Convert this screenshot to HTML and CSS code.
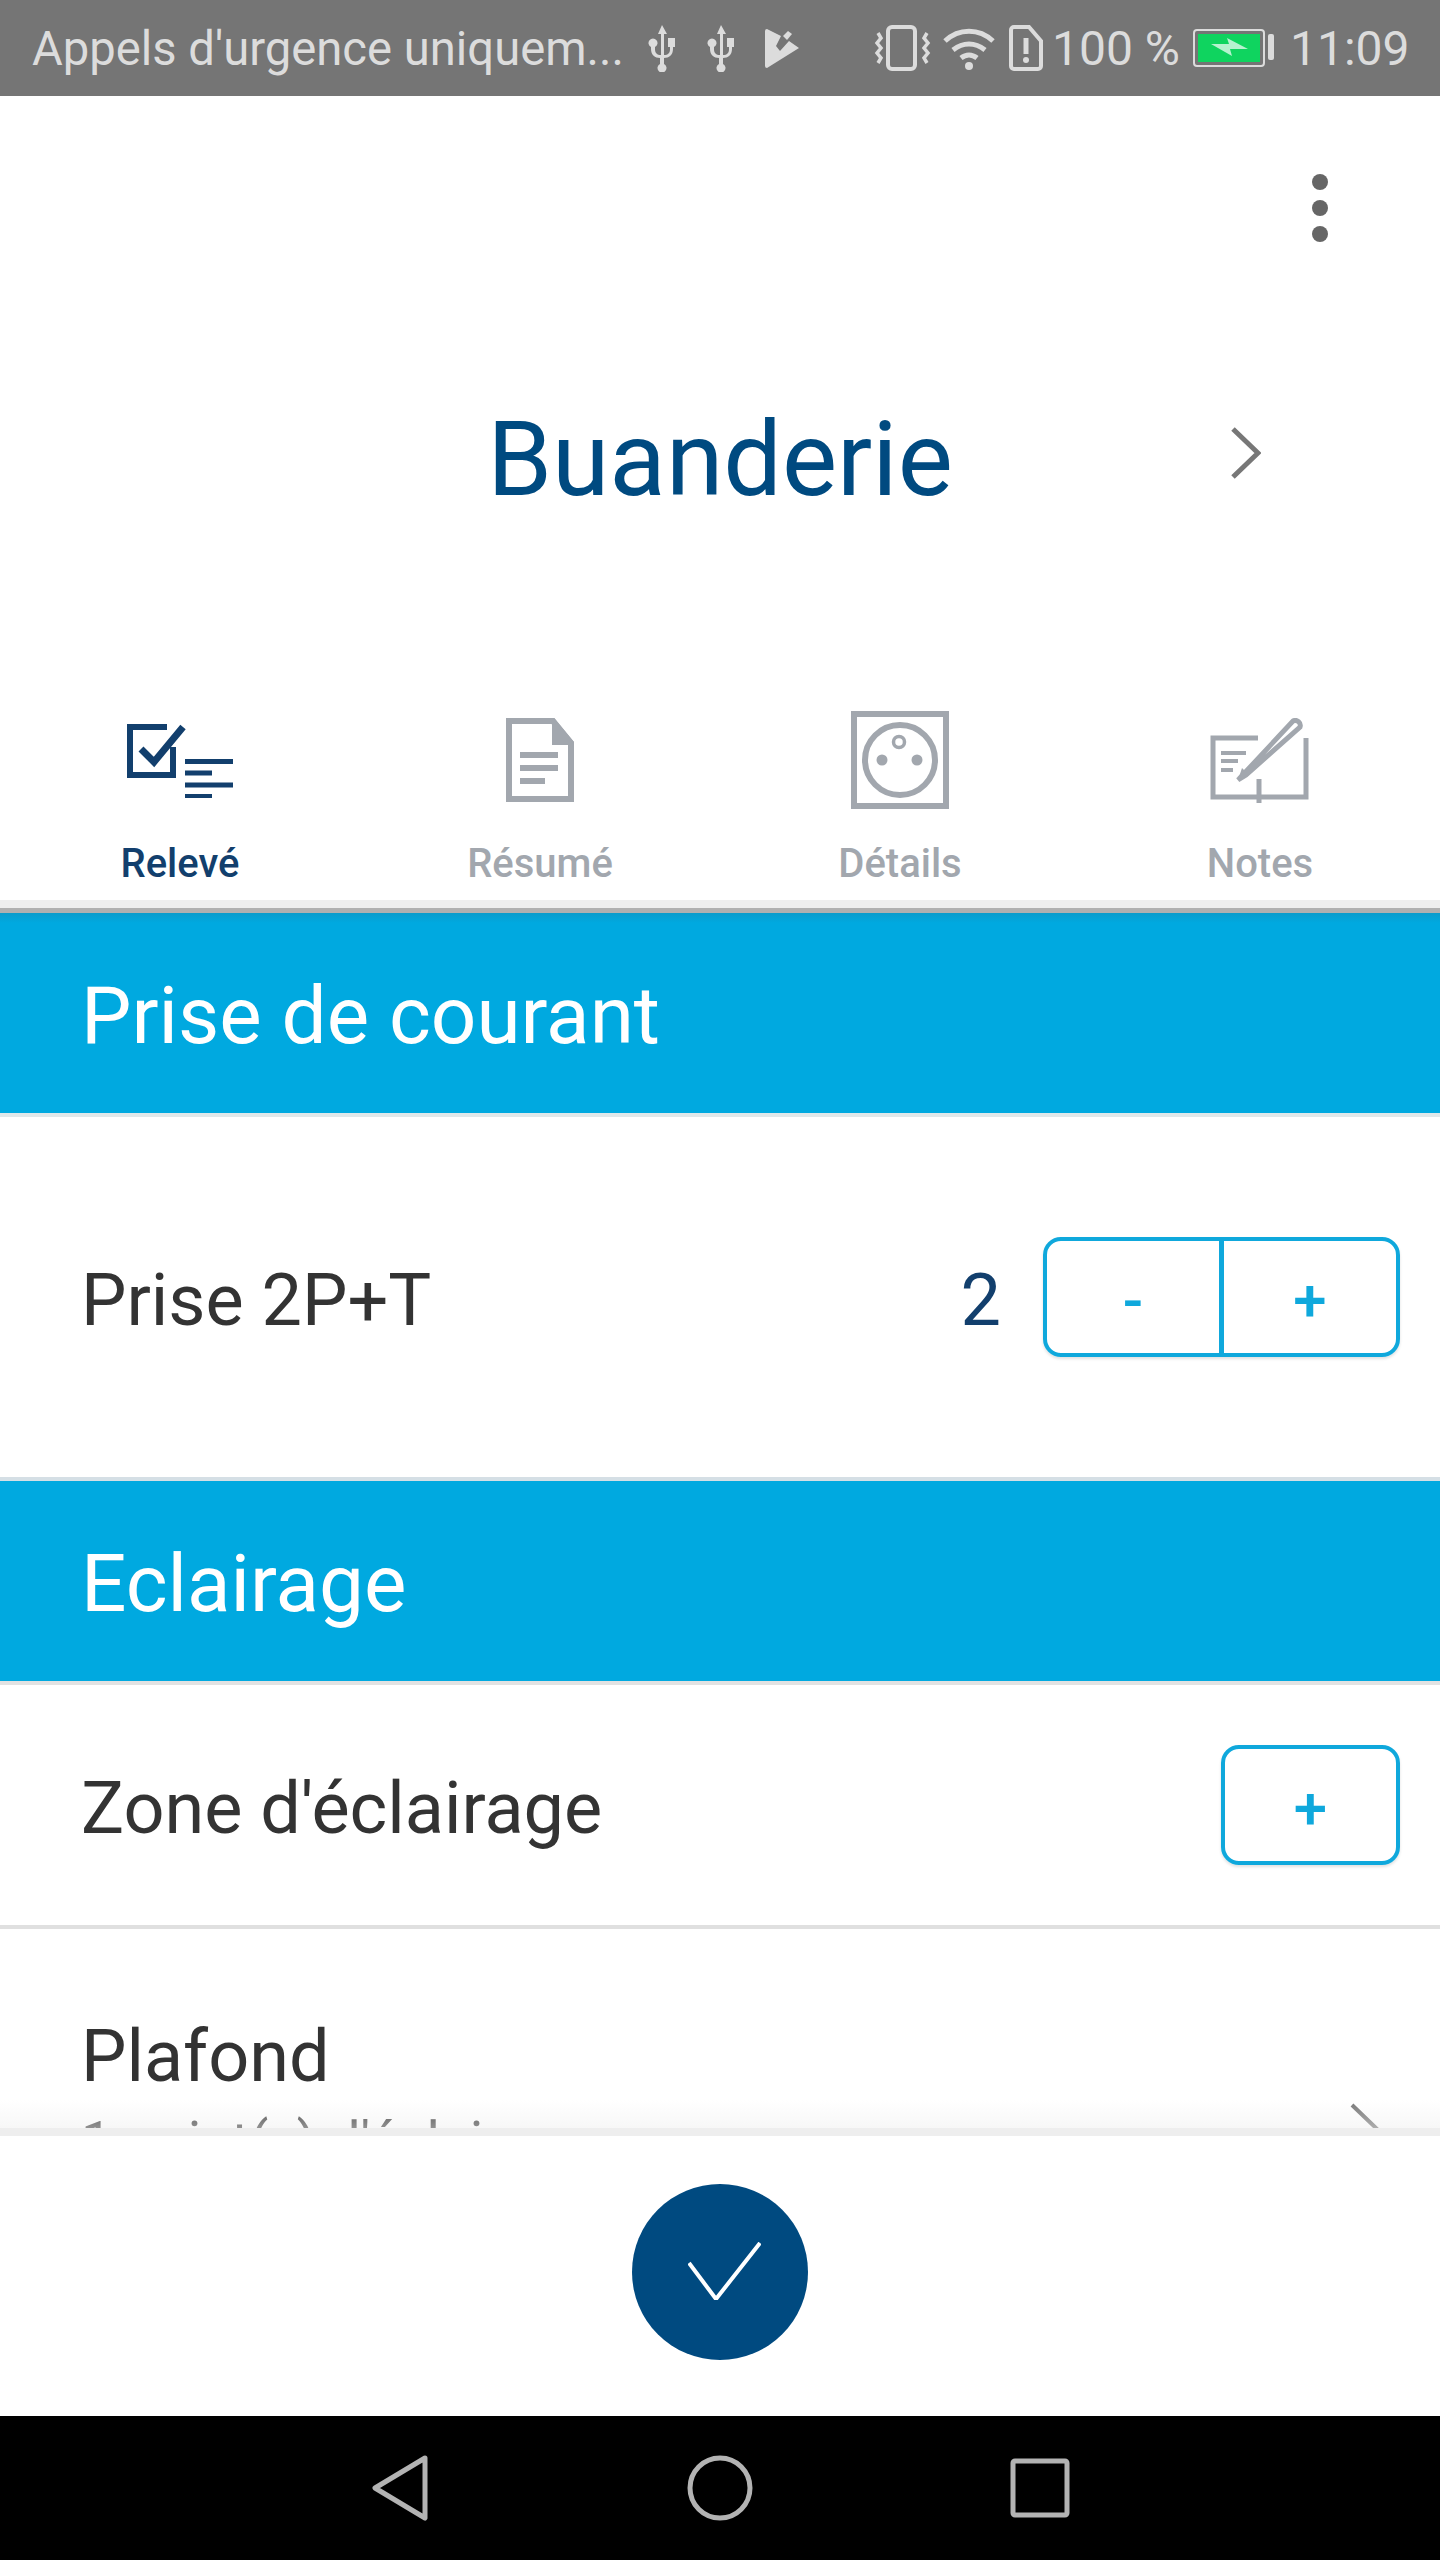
FILE: index.html
```html
<!DOCTYPE html>
<html lang="fr">
<head>
    <meta charset="UTF-8">
    <meta name="viewport" content="width=device-width, initial-scale=1.0">
    <title>Buanderie</title>
    <link rel="stylesheet" href="styles.css">
</head>
<body>
<div class="app">
    <div class="status-bar">
        <span class="status-text">Appels d'urgence uniquem...</span>
        <svg class="st-usb" width="30" height="47" viewBox="0 0 30 47" fill="#dcdcdc"><path d="M15 0l5 9h-3v21c4 0 6-2 6-6v-2h-2V13h7v9h-2v2c0 6-4 9-9 9v6a4.500 4.500 0 1 1-4 0v-6c-5 0-9-3-9-9v-2a4.500 4.500 0 1 1 4 0v2c0 4 2 6 6 6V9h-3z"/></svg>
        <svg class="st-usb2" width="30" height="47" viewBox="0 0 30 47" fill="#dcdcdc"><path d="M15 0l5 9h-3v21c4 0 6-2 6-6v-2h-2V13h7v9h-2v2c0 6-4 9-9 9v6a4.500 4.500 0 1 1-4 0v-6c-5 0-9-3-9-9v-2a4.500 4.500 0 1 1 4 0v2c0 4 2 6 6 6V9h-3z"/></svg>
        <svg class="st-play" width="34" height="39" viewBox="0 0 34 39"><path d="M2 0l14 7-5 10 4 5L24 12l10 7L2 39a2 2 0 0 1-2-2V2a2 2 0 0 1 2-2z" fill="#dcdcdc"/><path d="M18 7l5-5 4 3-5 6z" fill="#dcdcdc"/></svg>
        <svg class="st-vibrate" width="57" height="46" viewBox="0 0 57 46" fill="none" stroke="#dcdcdc"><rect x="14" y="2" width="27" height="42" rx="4" stroke-width="4"/><path d="M4 8l3 5-4 5 4 5-4 5 4 5-3 5M53 8l-3 5 4 5-4 5 4 5-4 5 3 5" stroke-width="3.500"/></svg>
        <svg class="st-wifi" width="52" height="43" viewBox="0 0 52 43" fill="none" stroke="#dcdcdc" stroke-width="5"><path d="M2 14c14-13 34-13 48 0M10 23c10-8 22-8 32 0M18 31c5-4 11-4 16 0"/><circle cx="26" cy="39" r="4" fill="#dcdcdc" stroke="none"/></svg>
        <svg class="st-sim" width="34" height="46" viewBox="0 0 34 46"><path d="M5 2h15l12 14v25a3 3 0 0 1-3 3H5a3 3 0 0 1-3-3V5a3 3 0 0 1 3-3z" fill="none" stroke="#dcdcdc" stroke-width="4"/><rect x="14.500" y="13" width="5" height="16" fill="#dcdcdc"/><circle cx="17" cy="35" r="3" fill="#dcdcdc"/></svg>
        <span class="status-pct">100 %</span>
        <svg class="st-battery" width="81" height="38" viewBox="0 0 81 38"><rect x="1" y="1" width="70" height="36" rx="3" fill="none" stroke="#dcdcdc" stroke-width="2"/><rect x="5" y="5" width="62" height="28" fill="#0fd45f"/><path d="M18 15h18l-2-6 21 11H37l2 7z" fill="#b6f2cf"/><rect x="75" y="5" width="6" height="26" rx="2" fill="#dcdcdc"/></svg>
        <span class="status-time">11:09</span>
    </div>

    <div class="menu-row">
        <div class="dots"><span></span><span></span><span></span></div>
    </div>

    <div class="title-row">
        <h1>Buanderie</h1>
        <div class="title-next">
            <svg width="30" height="52" viewBox="0 0 30 52" fill="none" stroke="#777" stroke-width="5"><path d="M2 2l25 24L2 50"/></svg>
        </div>
    </div>

    <nav class="tabs">
        <div class="tab active">
            <div class="tab-icon">
                <svg width="106" height="75" viewBox="0 0 106 75" fill="none" stroke="#123f6d"><path d="M40 4H3v48h43V24" stroke-width="6"/><path d="M14 26l13 13L56 4" stroke-width="7"/><path d="M58 38.500h48M58 50h27M58 62h48M58 73.500h27" stroke-width="5"/></svg>
            </div>
            <span>Relevé</span>
        </div>
        <div class="tab">
            <div class="tab-icon">
                <svg width="68" height="84" viewBox="0 0 68 84"><path d="M3 3h44l18 22v56H3z" fill="none" stroke="#a2a7ae" stroke-width="6"/><path d="M46 0h2l20 24v3H46z" fill="#a2a7ae"/><path d="M14 37h38M14 50h38M14 63h25" stroke="#a2a7ae" stroke-width="6"/></svg>
            </div>
            <span>Résumé</span>
        </div>
        <div class="tab">
            <div class="tab-icon">
                <svg width="98" height="98" viewBox="0 0 98 98" fill="none" stroke="#a2a7ae"><rect x="3" y="3" width="92" height="92" stroke-width="6"/><circle cx="49" cy="49" r="35" stroke-width="6"/><circle cx="48" cy="31" r="5.500" stroke-width="3.500"/><circle cx="31" cy="49" r="5.500" fill="#a2a7ae" stroke="none"/><circle cx="66" cy="49" r="5.500" fill="#a2a7ae" stroke="none"/></svg>
            </div>
            <span>Détails</span>
        </div>
        <div class="tab">
            <div class="tab-icon">
                <svg width="100" height="85" viewBox="0 0 100 85" fill="none" stroke="#a2a7ae"><path d="M48 20H3v59h93V20" stroke-width="5"/><path d="M49 61v24" stroke-width="5"/><path d="M11 35h25M11 43h17M11 52h12" stroke-width="4"/><path d="M29 61L83 3a5 5 0 0 1 7 6L36 57l-8 5z" stroke-width="5"/><path d="M28 62l4-12 7 7z" fill="#a2a7ae" stroke="none"/></svg>
            </div>
            <span>Notes</span>
        </div>
    </nav>
    <div class="tabs-line"></div>

    <main class="content">
        <h2 class="section first">Prise de courant</h2>
        <div class="row row-tall">
            <span class="row-label">Prise 2P+T</span>
            <span class="row-count">2</span>
            <div class="stepper">
                <button type="button">-</button>
                <button type="button">+</button>
            </div>
        </div>
        <h2 class="section">Eclairage</h2>
        <div class="row row-add">
            <span class="row-label">Zone d'éclairage</span>
            <div class="stepper single">
                <button type="button">+</button>
            </div>
        </div>
        <div class="row-sub">
            <div class="row-sub-text">
                <span class="row-label">Plafond</span>
                <span class="row-note">1 point(s) d'éclairage</span>
            </div>
            <svg width="30" height="52" viewBox="0 0 30 52" fill="none" stroke="#777" stroke-width="4"><path d="M2 2l25 24L2 50"/></svg>
        </div>
        <div class="content-fade"></div>
    </main>

    <footer class="validate">
        <button type="button" class="validate-btn">
            <svg width="73" height="58" viewBox="0 0 73 58" fill="none" stroke="#fff" stroke-width="4"><path d="M1 21l27 36L72 1"/></svg>
        </button>
    </footer>

    <div class="nav-bar">
        <svg width="56" height="66" viewBox="0 0 56 66" fill="none" stroke="#b3b3b3" stroke-width="5" stroke-linejoin="round"><path d="M53 3L3 33l50 30z"/></svg>
        <svg width="66" height="66" viewBox="0 0 66 66" fill="none" stroke="#b3b3b3" stroke-width="5"><circle cx="33" cy="33" r="30"/></svg>
        <svg width="60" height="60" viewBox="0 0 60 60" fill="none" stroke="#b3b3b3" stroke-width="5" stroke-linejoin="round"><rect x="3" y="3" width="54" height="54" rx="2"/></svg>
    </div>
</div>
</body>
</html>
```

FILE: styles.css
```css
* {
    box-sizing: border-box;
}

body {
    margin: 0;
    font-family: Roboto, sans-serif;
    background-color: #fff;
}

.app {
    width: 1440px;
    height: 2560px;
    display: flex;
    flex-direction: column;
    overflow: hidden;
}

/* status bar */
.status-bar {
    height: 96px;
    flex: none;
    display: flex;
    align-items: center;
    padding-left: 32px;
    background-color: #757575;
    color: #dcdcdc;
    font-size: 48px;
}

.status-text {
    width: 615px;
    padding-top: 2px;
    font-size: 47.2px;
    white-space: nowrap;
}

.st-usb2 {
    margin-left: 29px;
}

.st-play {
    margin-left: 29px;
}

.st-vibrate {
    margin-left: 75px;
}

.st-wifi {
    margin-left: 12px;
}

.st-sim {
    margin-left: 14px;
}

.status-pct {
    margin-left: 9px;
    width: 141px;
    white-space: nowrap;
}

.st-battery {
    flex: none;
}

.status-time {
    margin-left: 16px;
}

/* header */
.menu-row {
    height: 200px;
    flex: none;
    display: flex;
    justify-content: flex-end;
    padding: 78px 112px 0 0;
}

.dots {
    display: flex;
    flex-direction: column;
    gap: 10px;
}

.dots span {
    width: 16px;
    height: 16px;
    border-radius: 50%;
    background-color: #666;
}

.title-row {
    height: 200px;
    flex: none;
    display: grid;
    grid-template-columns: 1fr auto 1fr;
    align-items: center;
    margin-top: 63px;
}

.title-row h1 {
    grid-column: 2;
    margin: 0;
    font-size: 104px;
    font-weight: 400;
    color: #004a80;
}

.title-next {
    padding-left: 278px;
    display: flex;
    transform: translateY(-6px);
}

/* tabs */
.tabs {
    flex: none;
    display: grid;
    grid-template-columns: repeat(4, 1fr);
    height: 200px;
    margin-top: 141px;
}

.tab {
    display: flex;
    flex-direction: column;
    align-items: center;
    font-size: 40px;
    font-weight: 500;
    color: #a2a7ae;
}

.tab.active {
    color: #123f6d;
}

.tab-icon {
    height: 120px;
    display: flex;
    align-items: center;
    justify-content: center;
    margin-bottom: 20px;
}

.tabs-line {
    flex: none;
    height: 13px;
    background-color: #eee;
    border-bottom: 5px solid #b0b0b0;
}

/* list */
.content {
    position: relative;
    flex: 1;
    overflow: hidden;
}

.section {
    margin: 0;
    height: 200px;
    display: flex;
    align-items: center;
    padding: 6px 0 0 81px;
    font-size: 80px;
    font-weight: 400;
    color: #fff;
    background-color: #00a9e0;
}

.section.first {
    background-image: linear-gradient(#0a9ccc, #00a9e0 10px);
}

.row {
    display: flex;
    align-items: center;
    padding: 0 40px 0 81px;
}

.row-tall {
    height: 368px;
    border-top: 4px solid #dfe8ea;
    border-bottom: 4px solid #d5dfe5;
}

.row-add {
    height: 248px;
    justify-content: space-between;
    border-top: 4px solid #e2e2e2;
    border-bottom: 4px solid #e0e0e0;
}

.row-label {
    padding-top: 6px;
    font-size: 72px;
    color: #333;
}

.row-tall .row-label {
    flex: 1;
}

.row-count {
    margin-right: 42px;
    padding-top: 6px;
    font-size: 72px;
    color: #123f6d;
}

.stepper {
    display: flex;
    width: 357px;
    height: 120px;
    border: 4px solid #0fa8dc;
    border-radius: 18px;
    box-shadow: 0 2px 3px rgba(0, 0, 0, 0.12);
}

.stepper.single {
    width: 179px;
}

.stepper button {
    flex: 1;
    padding: 6px 0 0;
    border: none;
    background: none;
    font-family: Roboto, sans-serif;
    font-size: 60px;
    font-weight: 500;
    color: #0fa8dc;
}

.stepper button + button {
    border-left: 5px solid #0fa8dc;
}

.row-sub {
    display: flex;
    justify-content: space-between;
    padding: 79px 60px 0 81px;
}

.row-sub-text {
    display: flex;
    flex-direction: column;
}

.row-sub svg {
    margin-top: 95px;
}

.row-note {
    margin-top: 11px;
    font-size: 55px;
    color: #444;
}

.content-fade {
    position: absolute;
    left: 0;
    right: 0;
    bottom: 0;
    height: 28px;
    background-image: linear-gradient(rgba(238, 238, 238, 0), rgba(238, 238, 238, 0.45));
}

/* bottom */
.validate {
    flex: none;
    height: 288px;
    display: flex;
    justify-content: center;
    padding-top: 48px;
    border-top: 8px solid #eee;
}

.validate-btn {
    width: 176px;
    height: 176px;
    padding: 0 0 0 8px;
    border: none;
    border-radius: 50%;
    background-color: #004a80;
}

.nav-bar {
    flex: none;
    height: 144px;
    display: grid;
    grid-template-columns: repeat(3, 320px);
    justify-content: center;
    justify-items: center;
    align-items: center;
    background-color: #000;
}
```
